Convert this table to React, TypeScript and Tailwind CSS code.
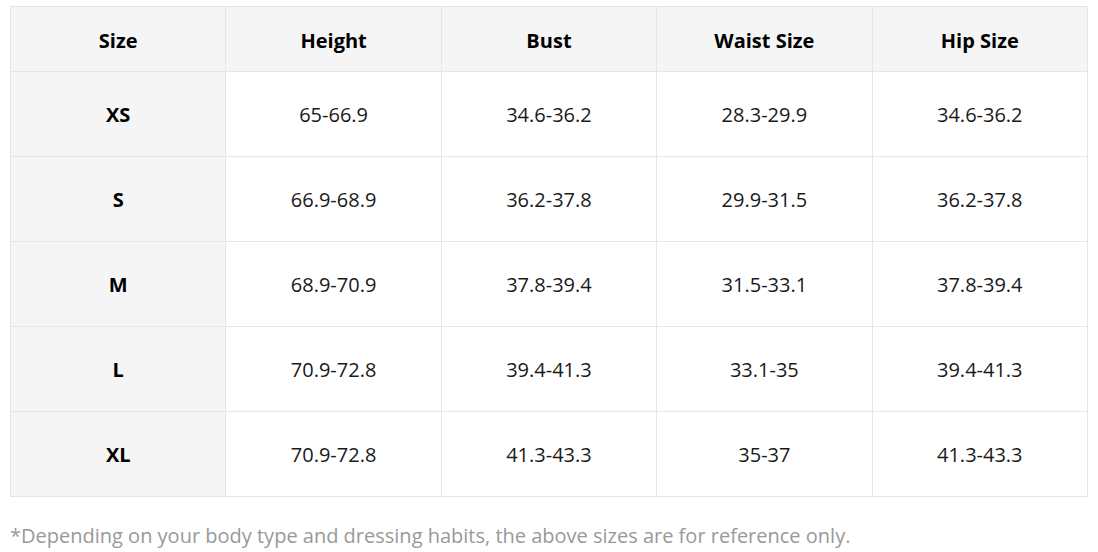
const headers = ["Size", "Height", "Bust", "Waist Size", "Hip Size"];

const rows = [
  ["XS", "65-66.9", "34.6-36.2", "28.3-29.9", "34.6-36.2"],
  ["S", "66.9-68.9", "36.2-37.8", "29.9-31.5", "36.2-37.8"],
  ["M", "68.9-70.9", "37.8-39.4", "31.5-33.1", "37.8-39.4"],
  ["L", "70.9-72.8", "39.4-41.3", "33.1-35", "39.4-41.3"],
  ["XL", "70.9-72.8", "41.3-43.3", "35-37", "41.3-43.3"],
];

export default function App() {
  return (
    <div className="w-[1098px] h-[552px] bg-white pt-[6px] px-[10px] font-['Open_Sans',sans-serif]">
      <table className="w-[1078px] table-fixed border-collapse">
        <thead>
          <tr className="h-[65px] bg-[#f5f5f5]">
            {headers.map((h) => (
              <th
                key={h}
                className="border border-[#e6e6e6] pt-[3px] text-center text-[20px] font-bold text-black"
              >
                {h}
              </th>
            ))}
          </tr>
        </thead>
        <tbody>
          {rows.map((r) => (
            <tr key={r[0]} className="h-[85px]">
              {r.map((c, i) => (
                <td
                  key={i}
                  className={
                    i === 0
                      ? "border border-[#e6e6e6] bg-[#f5f5f5] pt-[2px] text-center text-[20px] font-bold text-black"
                      : "border border-[#e6e6e6] bg-white pt-[2px] text-center text-[20px] text-[#1a1a1a]"
                  }
                >
                  {c}
                </td>
              ))}
            </tr>
          ))}
        </tbody>
      </table>
      <p className="mt-[29px] text-[20px] text-[#999] leading-none">
        *Depending on your body type and dressing habits, the above sizes are for reference only.
      </p>
    </div>
  );
}
